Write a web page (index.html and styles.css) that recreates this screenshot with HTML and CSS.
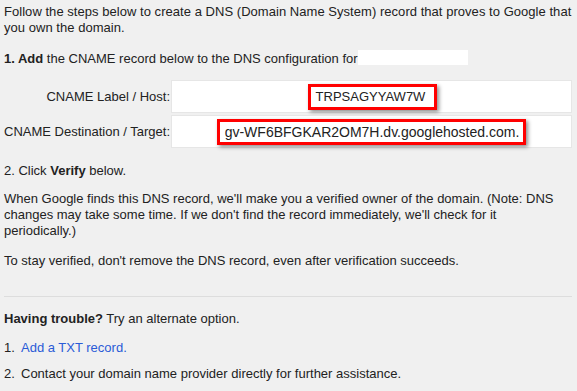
FILE: index.html
```html
<!DOCTYPE html>
<html>
<head>
<meta charset="utf-8">
<link rel="stylesheet" href="styles.css">
</head>
<body>
<div class="page">
  <p class="intro">Follow the steps below to create a DNS (Domain Name System) record that proves to Google that you own the domain.</p>
  <p class="step1"><b>1. Add</b> the CNAME record below to the DNS configuration for<span class="redact"></span></p>
  <div class="records">
    <div class="label">CNAME Label / Host:</div>
    <div class="value"><span class="mark mark-host">TRPSAGYYAW7W</span></div>
    <div class="label">CNAME Destination / Target:</div>
    <div class="value"><span class="mark mark-target">gv-WF6BFGKAR2OM7H.dv.googlehosted.com.</span></div>
  </div>
  <p class="step2">2. Click <b>Verify</b> below.</p>
  <p class="note">When Google finds this DNS record, we'll make you a verified owner of the domain. (Note: DNS changes may take some time. If we don't find the record immediately, we'll check for it periodically.)</p>
  <p class="stay">To stay verified, don't remove the DNS record, even after verification succeeds.</p>
  <div class="divider"></div>
  <p class="trouble"><b>Having trouble?</b> Try an alternate option.</p>
  <ol class="alts">
    <li class="alt"><span class="num">1.</span><a class="link" href="#">Add a TXT record.</a></li>
    <li class="alt alt-2"><span class="num">2.</span><span>Contact your domain name provider directly for further assistance.</span></li>
  </ol>
</div>
</body>
</html>
```

FILE: styles.css
```css
html, body {
  margin: 0;
  padding: 0;
  background: #f0f0f0;
}

.page {
  padding: 4px 5px 0 4px;
  font-family: "Liberation Sans", Arial, sans-serif;
  font-size: 13px;
  line-height: 16px;
  color: #222;
}

p {
  margin: 0;
}

.intro {
  margin-bottom: 14px;
  letter-spacing: 0.04px;
}

.step1 {
  margin-bottom: 13px;
}

.redact {
  display: inline-block;
  width: 110px;
  height: 15px;
  background: #fff;
  vertical-align: -2px;
}

.records {
  display: grid;
  grid-template-columns: 166px 1fr;
  column-gap: 1px;
  row-gap: 2px;
  margin-bottom: 15px;
}

.label {
  display: flex;
  align-items: center;
  justify-content: flex-end;
  white-space: nowrap;
}

.value {
  background: #fff;
  border: 1px solid #e6e6e6;
  height: 31px;
  display: flex;
  align-items: center;
  justify-content: center;
}

.mark {
  display: inline-block;
  border: 3px solid #f00;
  box-shadow: 2px 2px 4px rgba(0, 0, 0, 0.45);
  line-height: 16px;
  padding: 2px 0;
  color: #222;
  white-space: nowrap;
}

.mark-host {
  padding-left: 5px;
  padding-right: 9px;
  margin-left: 2px;
}

.mark-target {
  font-size: 14px;
  padding-left: 5px;
  padding-right: 4px;
}

.step2 {
  margin-bottom: 12px;
}

.note {
  margin-bottom: 14px;
}

.stay {
  margin-bottom: 27px;
}

.divider {
  height: 1px;
  background: #dddddd;
  margin-bottom: 14px;
}

.trouble {
  margin-bottom: 13px;
}

.alts {
  list-style: none;
  margin: 0;
  padding: 0;
}

.alt {
  display: flex;
}

.alt-2 {
  margin-top: 10px;
}

.num {
  width: 17px;
  flex: none;
}

.link {
  color: #2a5bd7;
  text-decoration: none;
}
```
